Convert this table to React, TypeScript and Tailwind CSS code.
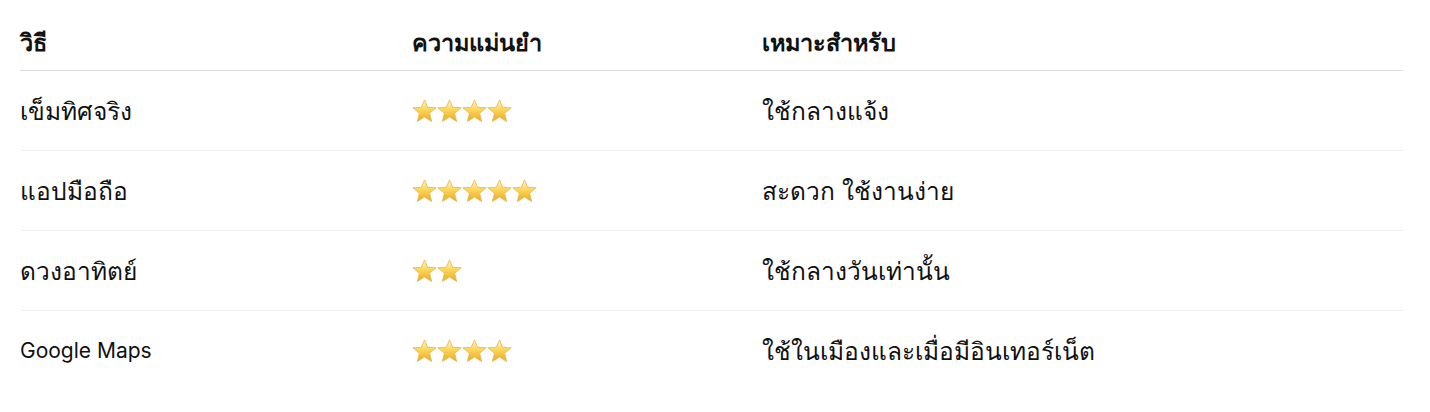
import React from "react";

const rows = [
  { method: "เข็มทิศจริง", stars: 4, note: "ใช้กลางแจ้ง" },
  { method: "แอปมือถือ", stars: 5, note: "สะดวก ใช้งานง่าย" },
  { method: "ดวงอาทิตย์", stars: 2, note: "ใช้กลางวันเท่านั้น" },
  { method: "Google Maps", stars: 4, note: "ใช้ในเมืองและเมื่อมีอินเทอร์เน็ต" },
];

const isLatin = (s: string) => /^[\x00-\x7f]+$/.test(s);

function Star({ id }: { id: string }) {
  return (
    <svg width="25" height="24" viewBox="0 0 25 24" className="block">
      <defs>
        <linearGradient id={id} x1="0" y1="0" x2="0" y2="1">
          <stop offset="0" stopColor="#fff8d2" />
          <stop offset="0.45" stopColor="#fcd65a" />
          <stop offset="1" stopColor="#eaa820" />
        </linearGradient>
      </defs>
      <path
        d="M12.5 0.8 L15.6 8.3 L24.2 8.8 L17.6 14.2 L19.7 22.6 L12.5 18 L5.3 22.6 L7.4 14.2 L0.8 8.8 L9.4 8.3 Z"
        fill={`url(#${id})`}
        stroke="#e6bb5c"
        strokeWidth="0.9"
        strokeLinejoin="round"
      />
    </svg>
  );
}

function Stars({ count, row }: { count: number; row: number }) {
  return (
    <div className="flex items-center">
      {Array.from({ length: count }).map((_, i) => (
        <Star key={i} id={`star-${row}-${i}`} />
      ))}
    </div>
  );
}

function Text({ children }: { children: string }) {
  return (
    <span className={isLatin(children) ? "text-[21px] leading-8" : "text-[24.5px] leading-8"}>{children}</span>
  );
}

export default function App() {
  return (
    <div
      className="min-h-[412px] bg-white px-5 text-[#111]"
      style={{ fontFamily: "Inter, 'Noto Sans', sans-serif" }}
    >
      <table className="w-[1383px] border-collapse text-left">
        <thead>
          <tr className="border-b border-[#dcdcdc]">
            <th className="w-[392px] pt-[27px] pb-[11px] text-[23.5px] font-bold leading-8">วิธี</th>
            <th className="w-[350px] pt-[27px] pb-[11px] text-[23.5px] font-bold leading-8">ความแม่นยำ</th>
            <th className="pt-[27px] pb-[11px] text-[23.5px] font-bold leading-8">เหมาะสำหรับ</th>
          </tr>
        </thead>
        <tbody>
          {rows.map((r, i) => (
            <tr key={r.method} className={i < rows.length - 1 ? "border-b border-[#f0f0f0]" : ""}>
              <td className="h-[80px] align-middle">
                <Text>{r.method}</Text>
              </td>
              <td className="h-[80px] align-middle">
                <Stars count={r.stars} row={i} />
              </td>
              <td className="h-[80px] align-middle">
                <Text>{r.note}</Text>
              </td>
            </tr>
          ))}
        </tbody>
      </table>
    </div>
  );
}
